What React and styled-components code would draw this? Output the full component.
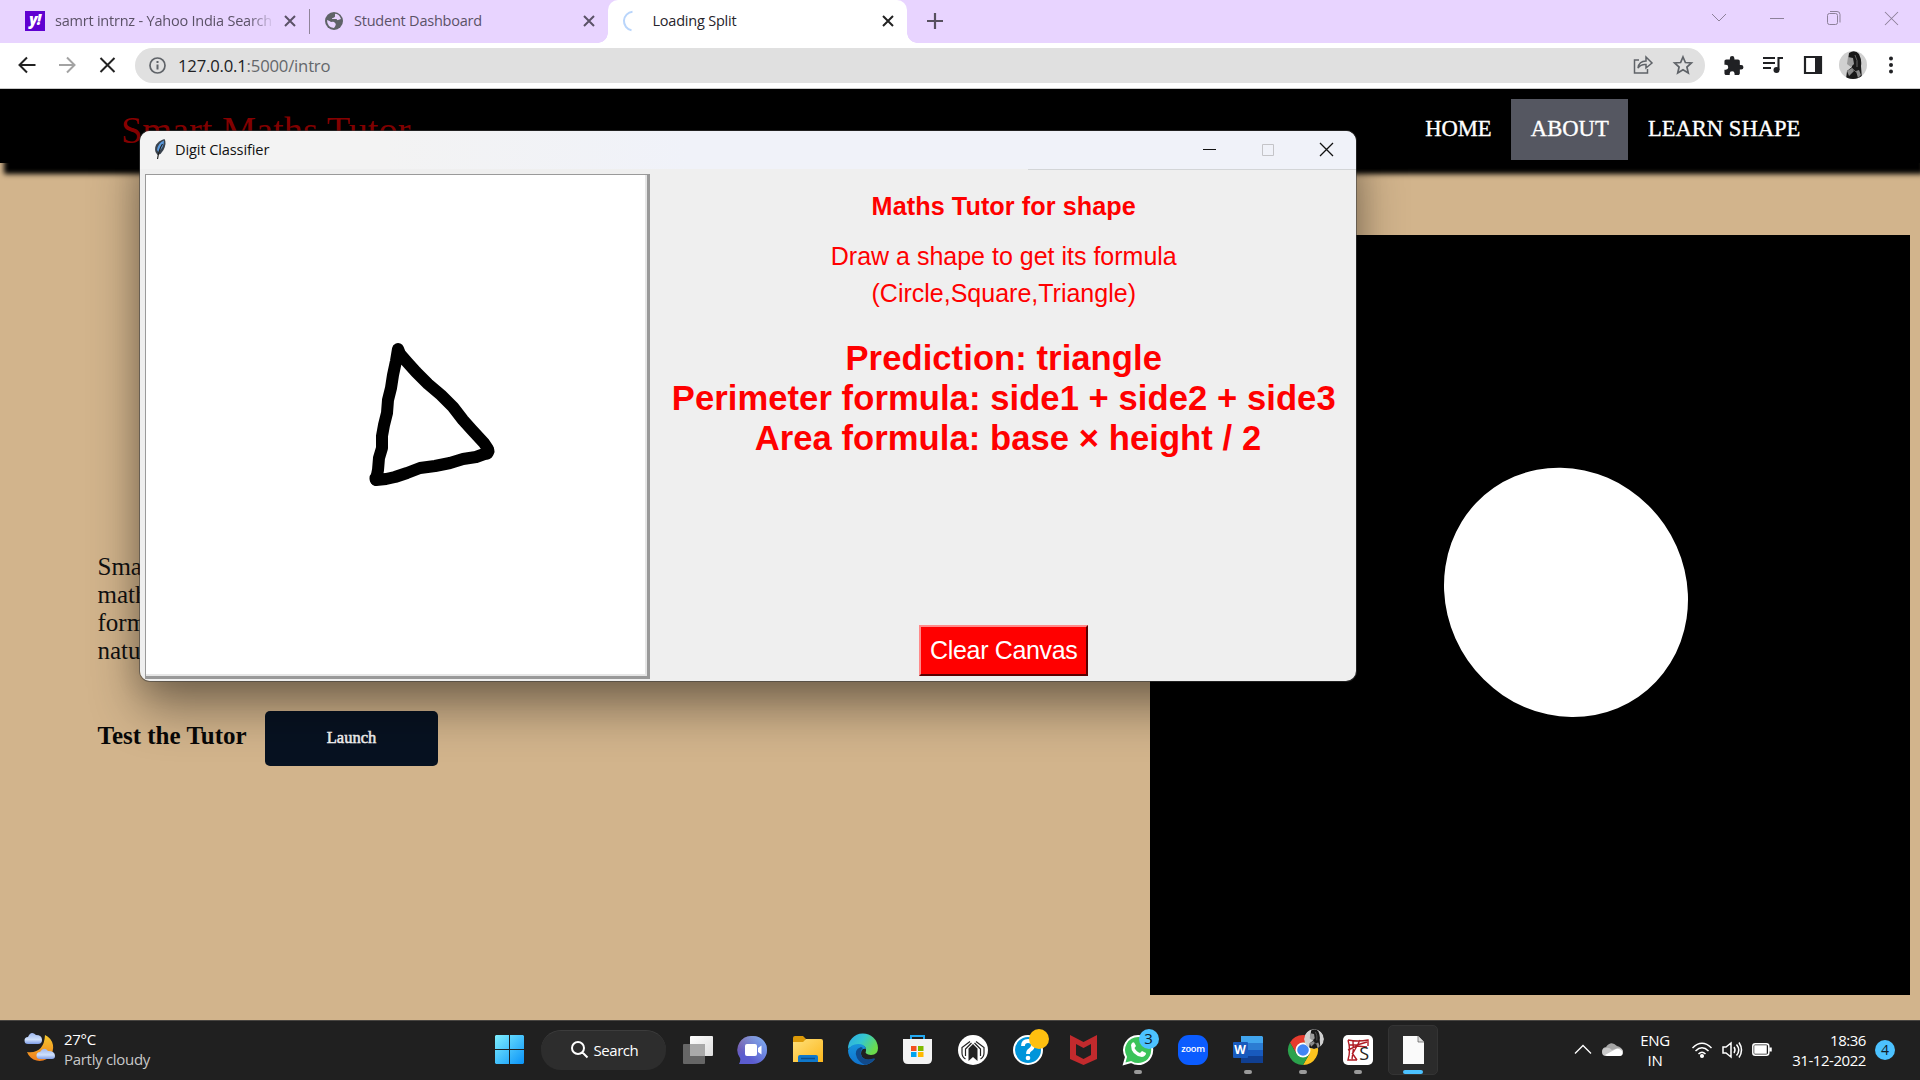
import React from "react";
import styled, { createGlobalStyle } from "styled-components";

const ui = `"Open Sans", "Noto Sans", sans-serif`;
const serif = `"Liberation Serif", "Times New Roman", serif`;
const sans = `"Liberation Sans", Arial, sans-serif`;

const Global = createGlobalStyle`
  * { box-sizing: border-box; }
  body { margin: 0; overflow: hidden; }
  svg { display: block; flex: none; overflow: visible; }
`;

const Screen = styled.div`
  position: relative;
  display: flex;
  flex-direction: column;
  width: 1920px;
  height: 1080px;
  overflow: hidden;
  background: #d2b48c;
`;

/* browser chrome */
const TabStrip = styled.div`
  display: flex;
  height: 43px;
  background: #e8d4ff;
  font: 14.5px ${ui};
  letter-spacing: -0.22px;
`;
const Tab = styled.div`
  display: flex;
  align-items: center;
  width: ${(p) => p.$width}px;
  height: 43px;
  padding: 0 ${(p) => p.$right}px 2px ${(p) => p.$left}px;
  gap: ${(p) => p.$gap || 10}px;
  color: ${(p) => (p.$active ? "#26242b" : "#5b5267")};
  background: ${(p) => (p.$active ? "#fff" : "transparent")};
  border-radius: 10px 10px 0 0;
  position: relative;
  ${(p) =>
    p.$active &&
    `&::before, &::after {
      content: ""; position: absolute; bottom: 0; width: 10px; height: 10px;
    }
    &::before { left: -10px; background: radial-gradient(circle at 0 0, transparent 9.5px, #fff 10px); }
    &::after { right: -10px; background: radial-gradient(circle at 100% 0, transparent 9.5px, #fff 10px); }`}
`;
const TabTitle = styled.span`
  flex: 1;
  min-width: 0;
  overflow: hidden;
  white-space: nowrap;
  ${(p) => p.$fade && "mask-image: linear-gradient(90deg, #000 88%, transparent 100%);"}
`;
const Divider = styled.div`
  width: 1px;
  height: 25px;
  margin-top: 9px;
  background: #8f8499;
`;
const YahooTile = styled.div`
  width: 20px;
  height: 20px;
  flex: none;
  background: #5f01d1;
  color: #fff;
  font: italic 900 15px/17px ${ui};
  text-align: center;
  letter-spacing: -0.5px;
`;
const NewTab = styled.div`
  padding: 13px 0 0 20px;
`;
const Caption = styled.div`
  display: flex;
  margin-left: auto;
  height: 36px;
  align-items: center;
  padding-right: 22.5px;
  gap: 43.5px;
`;
const Toolbar = styled.div`
  display: flex;
  align-items: center;
  height: 46px;
  padding: 0 19px 1px 17px;
  background: #fff;
  border-bottom: 1px solid #c9c9c9;
`;
const NavIcons = styled.div`
  display: flex;
  gap: 20px;
  width: 118px;
`;
const Omnibox = styled.div`
  display: flex;
  align-items: center;
  width: 1570px;
  height: 35px;
  padding: 0 12.5px 0 14px;
  border-radius: 18px;
  background: #e0e0e0;
  font: 16.7px ${ui};
  letter-spacing: -0.2px;
  color: #64676b;
`;
const Url = styled.span`
  flex: 1;
  margin-left: 12px;
  b { font-weight: 400; color: #202124; }
`;
const OmniIcons = styled.div`
  display: flex;
  gap: 20px;
`;
const Extensions = styled.div`
  display: flex;
  align-items: center;
  margin-left: auto;
`;
const ExtensionSlot = styled.div`
  display: flex;
  justify-content: center;
  width: 40px;
  &:last-child { width: 36px; margin-right: -8px; }
`;

/* web page */
const Page = styled.main`
  flex: 1;
  display: flex;
  flex-direction: column;
  font-family: ${serif};
`;
const Header = styled.header`
  display: flex;
  height: 74px;
  padding: 10px 100px 0 121px;
  background: #000;
  box-shadow: 4px 11px 5px #000;
  justify-content: space-between;
`;
const Brand = styled.div`
  padding-top: 9px;
  font-size: 38.3px;
  line-height: 44px;
  color: #8b0000;
`;
const Nav = styled.nav`
  display: flex;
`;
const NavLink = styled.a`
  display: flex;
  align-items: center;
  height: 61px;
  padding: 0 19.6px 2px;
  font-size: 22.6px;
  color: #fff;
  -webkit-text-stroke: 0.35px #fff;
  background: ${(p) => (p.$active ? "#555761" : "transparent")};
`;
const Body = styled.div`
  display: flex;
  flex: 1;
`;
const Intro = styled.section`
  width: 1150px;
  padding: 390px 0 0 97.5px;
`;
const Paragraph = styled.p`
  margin: 0 0 46px;
  font-size: 25px;
  line-height: 28px;
  color: #111;
`;
const TestRow = styled.div`
  display: flex;
  align-items: center;
  gap: 18.500px;
`;
const TestLabel = styled.span`
  width: 149px;
  padding-bottom: 5px;
  white-space: nowrap;
  font-size: 25px;
  font-weight: 700;
  color: #080808;
`;
const LaunchButton = styled.button`
  width: 173px;
  height: 55px;
  padding-bottom: 3px;
  border: 0;
  border-radius: 5px;
  background: #071221;
  color: #f4f4f4;
  -webkit-text-stroke: 0.5px #f4f4f4;
  font: 16.5px ${serif};
`;
const Preview = styled.section`
  width: 760px;
  height: 760px;
  margin-top: 72px;
  background: #000;
`;

/* desktop window floating over the browser */
const Dialog = styled.div`
  position: absolute;
  left: 140px;
  top: 131px;
  width: 1216px;
  height: 550px;
  display: flex;
  flex-direction: column;
  border-radius: 10px;
  overflow: hidden;
  background: #efefef;
`;
const DialogShadow = styled.div`
  position: absolute;
  left: 140px;
  top: 131px;
  width: 1216px;
  height: 550px;
  border-radius: 10px;
  box-shadow: 0 0 0 1px rgba(60, 60, 60, 0.55), 0 26px 50px rgba(0, 0, 0, 0.42), 0 4px 28px rgba(0, 0, 0, 0.12);
`;
const TitleBar = styled.div`
  display: flex;
  align-items: center;
  height: 38px;
  padding: 0 23px 2px 13px;
  font: 14.6px ${ui};
  letter-spacing: -0.12px;
  color: #111;
  background: linear-gradient(90deg, #f3f3f3 20%, #f0f2f9 45%);
`;
const TitleText = styled.span`
  flex: 1;
  margin-left: 8px;
`;
const TitleIcons = styled.div`
  display: flex;
  gap: 45.5px;
`;
const DialogBody = styled.div`
  display: flex;
  flex: 1;
  padding: 0 0 2px 5px;
`;
const Canvas = styled.div`
  width: 505px;
  height: 505px;
  margin-top: 5px;
  border: 1.5px solid #9a9a9a;
  border-right: 3px solid #999;
  border-bottom: 3px solid #999;
  box-shadow: inset -2px -2px #e6e6e6;
  background: #fff;
`;
const Results = styled.div`
  flex: 1;
  display: flex;
  flex-direction: column;
  align-items: center;
  border-top: 1px solid transparent;
  border-image: linear-gradient(90deg, transparent 53.5%, #d3d5d7 53.5%) 1;
  padding-left: 1.5px;
  font-family: ${sans};
  color: #f00;
  text-align: center;
  white-space: pre;
`;
const Heading = styled.h1`
  margin: 21px 0 0;
  font-size: 25.2px;
  letter-spacing: 0.08px;
  line-height: 30px;
`;
const Hint = styled.p`
  margin: 17px 0 0;
  font-size: 25px;
  line-height: 36.5px;
`;
const Answer = styled.p`
  margin: 27px 0 0;
  font-size: 34.6px;
  font-weight: 700;
  letter-spacing: 0.07px;
  line-height: 40px;
`;
const ClearButton = styled.button`
  width: 169px;
  height: 51px;
  margin-top: 166.500px;
  padding: 0;
  background: #f00;
  border: 2px solid;
  border-color: #ff8a8a #5a0000 #5a0000 #ff8a8a;
  font: 25px ${sans};
  letter-spacing: -0.35px;
  color: #fff;
`;

/* taskbar */
const Taskbar = styled.footer`
  display: flex;
  align-items: center;
  height: 60px;
  padding-bottom: 2px;
  border-top: 1px solid #484541;
  background: #202020;
  font: 15px/20px ${ui};
  color: #fff;
`;
const Weather = styled.div`
  display: flex;
  width: 482px;
  padding: 0 0 1px 25px;
  gap: 9px;
  letter-spacing: -0.3px;
  svg { margin-top: 3px; }
  span { display: block; }
  span + span { color: #c8c8c8; }
`;
const Slot = styled.div`
  position: relative;
  display: flex;
  align-items: center;
  justify-content: center;
  width: 55px;
  height: 50px;
  ${(p) =>
    p.$mark &&
    `&::after {
      content: ""; position: absolute; bottom: 1px; left: calc(50% - ${p.$mark === "on" ? 10 : 4}px);
      width: ${p.$mark === "on" ? 20 : 8}px; height: 4px; border-radius: 2px;
      background: ${p.$mark === "on" ? "#4cc2ff" : "#9a9a9a"};
    }`}
`;
const ActiveTile = styled.div`
  display: flex;
  align-items: center;
  justify-content: center;
  width: 50px;
  height: 50px;
  border: 1px solid #343434;
  border-radius: 5px;
  background: #2b2b2b;
`;
const SearchPill = styled.div`
  display: flex;
  align-items: center;
  width: 125px;
  height: 40px;
  margin: 0 4.5px 0 4px;
  padding: 0 0 1px 29.500px;
  gap: 6px;
  border-radius: 20px;
  border-top: 1px solid #3c3c3c;
  background: #2d2d2d;
  letter-spacing: -0.45px;
`;
const Badge = styled.div`
  position: absolute;
  left: 28px;
  top: 4px;
  width: 20px;
  height: 20px;
  border-radius: 50%;
  background: ${(p) => p.$color};
  color: #10202a;
  font: 15px/19px ${ui};
  text-align: center;
  overflow: hidden;
`;
const ZoomTile = styled.div`
  width: 30px;
  height: 30px;
  border-radius: 11px;
  background: #0b5cff;
  font: 600 9.3px/27px ${ui};
  letter-spacing: -0.3px;
  text-align: center;
`;
const WordMark = styled.div`
  position: absolute;
  left: 12px;
  top: 17px;
  width: 15px;
  height: 16px;
  border-radius: 1px;
  background: #185abd;
  font: 700 12px/15px ${ui};
  text-align: center;
`;
const Tray = styled.div`
  display: flex;
  align-items: center;
  margin-left: auto;
  padding-right: 25px;
`;
const Lang = styled.div`
  width: 50px;
  margin: 0 12px 0 7px;
  text-align: center;
  letter-spacing: -0.3px;
`;
const Status = styled.div`
  display: flex;
  align-items: center;
  gap: ${(p) => p.$gap || 10}px;
`;
const Clock = styled.div`
  width: 94px;
  margin-right: 9px;
  text-align: right;
  letter-spacing: -0.45px;
`;
const Count = styled.div`
  width: 20px;
  height: 20px;
  border-radius: 50%;
  background: #4cc2ff;
  color: #10202a;
  font: 14px/19px ${ui};
  text-align: center;
`;

const Line = ({ w = 16, h = w, box = `0 0 ${w} ${h}`, d, color = "#222", sw = 2, fill = "none" }) => (
  <svg width={w} height={h} viewBox={box} fill={fill} stroke={color} strokeWidth={sw}>
    <path d={d} />
  </svg>
);
const Close = ({ color, size = 10, sw = 2 }) => (
  <Line w={size} box="0 0 10 10" d="M0 0 10 10M10 0 0 10" color={color} sw={sw} />
);

const Globe = () => (
  <svg width="18" height="18" viewBox="0 0 18 18">
    <circle cx="9" cy="9" r="9" fill="#5f6368" />
    <path d="M2 8q3 1 4 2 3-1 4 1 2 1-1 5Q2 15 2 8ZM8 2q6-1 8 5l-3 1-3 1-3-1V6l3-1Z" fill="#e8d4ff" />
    <path d="M9 1v3L6 6v2h5l2 3 3-1" fill="none" stroke="#5f6368" strokeWidth="2" />
  </svg>
);
const Info = () => (
  <svg width="17" height="17" viewBox="0 0 17 17" fill="none" stroke="#5f6368" strokeWidth="1.7">
    <circle cx="8.5" cy="8.5" r="7.5" />
    <path d="M8.5 7.5v5M8.5 4v2" strokeWidth="2" />
  </svg>
);
const Portrait = ({ size }) => (
  <svg width={size} height={size} viewBox="0 0 28 28">
    <defs><clipPath id="portrait"><circle cx="14" cy="14" r="14" /></clipPath></defs>
    <g clipPath="url(#portrait)">
      <path fill="#d0d0d0" d="M0 0h28v28H0z" />
      <path fill="#191919" d="M10 2q6-4 10 1 3 6 2 12l1 13H7l1-8 5-4-1-4-3-3Z" />
      <path fill="#9b9b9b" d="m9 6 5 1 1 6-3 3-4-3Z" />
      <path fill="#8a8a8a" d="m8 20 5-3 2 3-5 5ZM17 20l3-1 2 5-3 3Z" />
      <path fill="none" stroke="#666" d="M16 4q3 5 2 12M13 17l5 5" />
    </g>
  </svg>
);
const Puzzle = () => (
  <svg width="19" height="19" viewBox="1.5 1 21 21" fill="#202124">
    <path d="M20.5 11H19V7c0-1.1-.9-2-2-2h-4V3.500a2.500 2.500 0 0 0-5 0V5H4c-1.100 0-2 .9-2 2v3.800h1.500a2.700 2.700 0 0 1 0 5.400H2V20c0 1.100.9 2 2 2h3.800v-1.500a2.700 2.700 0 0 1 5.400 0V22H17c1.100 0 2-.9 2-2v-4h1.500a2.500 2.500 0 0 0 0-5z" />
  </svg>
);
const MusicQueue = () => (
  <svg width="20" height="18" viewBox="0 0 20 18">
    <path d="M0 2h12M0 7h12M0 12h8M15.500 14V2h4.500" stroke="#202124" strokeWidth="2.100" fill="none" />
    <circle cx="13.500" cy="14" r="3" fill="#202124" />
  </svg>
);
const SidePanel = () => (
  <svg width="18" height="18" viewBox="0 0 18 18">
    <path d="M1 1h16v16H1Z" fill="none" stroke="#202124" strokeWidth="2.200" />
    <path d="M11 1h6v16h-6Z" fill="#202124" />
  </svg>
);
const Dots = () => (
  <svg width="18" height="18" viewBox="0 0 18 18" fill="#202124">
    <circle cx="9" cy="2.500" r="2" /><circle cx="9" cy="9" r="2" /><circle cx="9" cy="15.500" r="2" />
  </svg>
);
const Feather = () => (
  <svg width="14" height="20" viewBox="0 0 14 20">
    <path d="M11.500 0Q14 4 10.500 11l-3 4-3 1-2-3Q0 4 11.500 0Z" fill="#39424d" />
    <path d="M11 1.500Q5 4 4 11l1.500 2Q11 8 11 1.500Z" fill="#5b9be0" />
    <path d="M9.500 5Q6 10 4.500 20" stroke="#222" strokeWidth="1.200" fill="none" />
  </svg>
);
const Moon = () => (
  <svg width="30" height="30" viewBox="0 0 30 30">
    <defs>
      <linearGradient id="moon" x2="0" y2="1"><stop stopColor="#f7c92e" /><stop offset="1" stopColor="#ef7d1c" /></linearGradient>
      <linearGradient id="cloud" x2="0" y2="1"><stop stopColor="#9db7f0" /><stop offset=".6" stopColor="#cfe0fb" /><stop offset="1" stopColor="#7d9ce6" /></linearGradient>
    </defs>
    <path d="M20 3a13.500 13.500 0 1 1-18 17q17 2 18-17Z" fill="url(#moon)" />
    <path d="M3 12a3.500 3.500 0 0 1 0-7Q6-2 11 3q6 0 6 5 0 4-4 4Z" fill="url(#cloud)" />
    <path d="M15 27a3.500 3.500 0 0 1 0-7q4-6 8-1 7 0 7 5 0 3-3 3Z" fill="url(#cloud)" />
  </svg>
);
const WinLogo = () => (
  <svg width="29" height="29" viewBox="0 0 29 29">
    <defs><linearGradient id="win" gradientUnits="userSpaceOnUse" x1="0" y1="0" x2="29" y2="29"><stop stopColor="#7ff0ff" /><stop offset="1" stopColor="#0a93f8" /></linearGradient></defs>
    <path d="M1 0h13v14H0V1ZM15 0h13l1 1v13H15ZM0 15h14v14H1l-1-1ZM15 15h14v13l-1 1H15Z" fill="url(#win)" />
  </svg>
);
const TaskView = () => (
  <svg width="30" height="28" viewBox="0 0 30 28">
    <defs><linearGradient id="tv" x2="1" y2="1"><stop stopColor="#fff" /><stop offset="1" stopColor="#ddd" /></linearGradient></defs>
    <rect y="8" width="22" height="20" rx="1" fill="#666" />
    <rect x="7" width="23" height="20" rx="1" fill="url(#tv)" />
    <path d="M7 8h15v12H7Z" fill="#a9a9a9" />
  </svg>
);
const Chat = () => (
  <svg width="28" height="28" viewBox="1 0 28 28">
    <defs><linearGradient id="chat" x2=".6" y2="1"><stop stopColor="#8c6399" /><stop offset=".6" stopColor="#5b5ccf" /></linearGradient>
      <linearGradient id="chat2" x1="1" x2=".3" y2=".7"><stop stopColor="#84b7f3" /><stop offset="1" stopColor="#84b7f3" stopOpacity="0" /></linearGradient></defs>
    <path d="M15 0a14 14 0 1 1 0 28H1q2-4 1-6A14 14 0 0 1 15 0Z" fill="url(#chat)" />
    <path d="M15 0a14 14 0 1 1 0 28H1q2-4 1-6A14 14 0 0 1 15 0Z" fill="url(#chat2)" />
    <rect x="7" y="8" width="12" height="12" rx="2" fill="#fff" />
    <path d="m20 12 3.500-2.500v9L20 16Z" fill="#fff" />
  </svg>
);
const Folder = () => (
  <svg width="30" height="27" viewBox="0 0 30 27">
    <defs><linearGradient id="fo" x2="1" y2="1"><stop stopColor="#ffe07a" /><stop offset="1" stopColor="#fcb71c" /></linearGradient></defs>
    <path d="M0 2q0-2 2-2h8l3 3-2 4H0Z" fill="#dd9a08" />
    <path d="M0 6h10l3-3h15q2 0 2 2v21H0Z" fill="url(#fo)" />
    <path d="M5 26v-5q0-2 2-2h16q2 0 2 2v5Z" fill="#0f78cb" />
    <path d="M8 22.500h14" stroke="#0b4d8c" strokeWidth="1.500" />
  </svg>
);
const Edge = () => (
  <svg width="30" height="30" viewBox="0 0 30 30">
    <defs><linearGradient id="e1" x2="1" y2=".5"><stop stopColor="#2aa7e8" /><stop offset=".5" stopColor="#35c7cf" /><stop offset="1" stopColor="#6bdb4b" /></linearGradient>
      <linearGradient id="e2" x2="0" y2="1"><stop stopColor="#1793dc" /><stop offset="1" stopColor="#1073ce" /></linearGradient></defs>
    <path d="M0 14A15 15 0 0 1 30 13q0 7-7 7-7-1-5-4 1-6-7-6-7 0-11 4Z" fill="url(#e1)" />
    <path d="M0 15q3-6 10-6 7 0 8 5-5-1-5 5 1 8 14 5-5 6-12 6A15 15 0 0 1 0 15Z" fill="url(#e2)" />
    <path d="M13 12q-8 3-4 11 3 5 8 7 6-1 10-7-11 4-14-3-1-5 2-7Z" fill="#114a8b" />
  </svg>
);
const Store = () => (
  <svg width="30" height="29" viewBox="0 0 30 29">
    <path d="M8 6V1h13v5" stroke="#23a9f1" strokeWidth="2" fill="none" />
    <path d="M0 4h29v20q0 5-5 5H5q-5 0-5-5Z" fill="#f3f3f3" />
    <path d="M8 11h5.500v5H8Z" fill="#f25022" /><path d="M15 11h5.500v5H15Z" fill="#7fba00" />
    <path d="M8 17h5.500v5H8Z" fill="#00a4ef" /><path d="M15 17h5.500v5H15Z" fill="#ffb900" />
  </svg>
);
const Hood = () => (
  <svg width="30" height="30" viewBox="0 0 30 30">
    <circle cx="15" cy="15" r="15" fill="#fff" />
    <path d="M10.500 26V13.500L15 9l4.500 4.500V26L15 22Z" fill="#222" />
    <path d="M7.500 24Q4 22 4 18v-5.500l8-6M22.500 24q3.500-2 3.500-6v-5.500l-8-6M7.500 21v-7l6-6M22.500 21v-7l-6-6" fill="none" stroke="#222" strokeWidth="1.200" />
  </svg>
);
const Help = () => (
  <svg width="30" height="30" viewBox="0 0 30 30">
    <circle cx="15" cy="15" r="14" fill="#0095da" stroke="#fff" strokeWidth="2" />
    <path d="M10 11q0-5 5-5t5 4q0 3-3 5-2 1-2 4" stroke="#fff" strokeWidth="3.800" fill="none" />
    <circle cx="15" cy="23" r="2.300" fill="#fff" />
  </svg>
);
const Shield = () => (
  <svg width="27" height="30" viewBox="0 0 27 30">
    <path d="M0 0 13.500 7 27 0v24l-13.500 6L0 24ZM6 9v11l7.500 4 7.500-4V9l-7.500 4Z" fill="#c22a2d" fillRule="evenodd" />
  </svg>
);
const WhatsApp = () => (
  <svg width="30" height="30" viewBox="0 0 30 30">
    <path d="M15 1a14 14 0 1 1-7 26l-7 2 2-7A14 14 0 0 1 15 1Z" fill="#3bc35a" stroke="#fff" strokeWidth="2" />
    <path d="M9 8q2-2 3 1l1 2-1.500 2q2 4 5.500 5l2-2 4 2q0 3-4 4Q8 20 8 10Z" fill="#fff" />
  </svg>
);
const WordPage = () => (
  <svg width="29" height="27" viewBox="0 0 29 27">
    <path d="M7 0h21l1 1v6H7Z" fill="#41a5ee" /><path d="M7 7h22v7H7Z" fill="#2b7cd3" />
    <path d="M7 14h22v6H7Z" fill="#185abd" /><path d="M7 20h22v7H7Z" fill="#103f91" />
  </svg>
);
const Chrome = () => (
  <svg width="30" height="30" viewBox="0 0 30 30">
    <path d="M2 7.500A15 15 0 0 1 28 7.500H15L8.500 18.700Z" fill="#e63b2e" />
    <path d="M28 7.500A15 15 0 0 1 15 30l6.500-11.300L15 7.500Z" fill="#fcc31e" />
    <path d="M15 30A15 15 0 0 1 2 7.500L8.500 18.700h13Z" fill="#2ba24c" />
    <circle cx="15" cy="15" r="7.500" fill="#fff" /><circle cx="15" cy="15" r="5.800" fill="#4285f4" />
  </svg>
);
const SpyderTile = styled.div`
  position: relative;
  width: 30px;
  height: 30px;
  border-radius: 5px;
  background: #fff;
`;
const SpyderLetter = styled.span`
  position: absolute;
  right: 4px;
  bottom: 3px;
  font: 500 18px/18px ${ui};
  color: #222;
`;
const Spyder = () => (
  <SpyderTile>
    <svg width="30" height="30" viewBox="0 0 30 30" fill="none" stroke="#b01c24" strokeWidth="1.400">
      <path d="M5 5q10 2 20 0v6M5 5q3 10 0 20h9M10 6q1 9-1 18M5 15l9-4 3-6M6 10h8l10-3M14 11l10 1M14 11l-4 7M9 18l5 7" />
    </svg>
    <SpyderLetter>S</SpyderLetter>
  </SpyderTile>
);
const File = () => (
  <svg width="21" height="28" viewBox="0 0 21 28">
    <path d="M0 0h15l6 6v22H0Z" fill="#fafafa" /><path d="M15 0v6h6" fill="#ddd" stroke="#555" strokeWidth=".7" />
  </svg>
);
const OneDrive = () => (
  <svg width="20" height="13" viewBox="0 0 20 13">
    <path d="M4 12a4 4 0 0 1-1-8Q8-3 14 3q5 1 6 6Z" fill="#a5a5a5" />
    <path d="M3 13a4 4 0 0 1 0-8q3-1 6 2l6-2q5 0 5 4t-4 4Z" fill="#c9c9c9" />
    <path d="m2 12 11-6q3-1 6 2 2 5-3 5H4Z" fill="#fff" />
  </svg>
);

export default function App() {
  return (
    <>
      <Global />
      <Screen>
        <TabStrip>
          <Tab $width={309} $left={25} $right={14}>
            <YahooTile>y!</YahooTile>
            <TabTitle $fade>samrt intrnz - Yahoo India Search</TabTitle>
            <Close color="#5b5267" />
          </Tab>
          <Divider />
          <Tab $width={298} $left={15} $right={14.5} $gap={11}>
            <Globe />
            <TabTitle>Student Dashboard</TabTitle>
            <Close color="#5b5267" />
          </Tab>
          <Tab $active $width={299} $left={14} $right={14.5} $gap={10.5}>
            <Line w={20} d="M11.500 .8A9.300 9.300 0 0 0 10.500 19.200" box="1 0 20 20" color="#b9d5fb" />
            <TabTitle>Loading Split</TabTitle>
            <Close color="#222" />
          </Tab>
          <NewTab>
            <Line w={16} d="M8 0v16M0 8h16" color="#57505f" sw={2.2} />
          </NewTab>
          <Caption>
            <Line w={14} h={8} d="M0 0 7 7 14 0" color="#8d8199" sw={1} />
            <Line w={14} h={14} d="M0 7.500h14" color="#8d8199" sw={1} />
            <Line w={14} h={14} d="M2.500 2.500h6q2 0 2 2v7q0 2-2 2h-6q-2 0-2-2v-7q0-2 2-2M3 .5h7q3 0 3 3v8" color="#8d8199" sw={1} />
            <Close color="#8d8199" size={13} sw={0.8} />
          </Caption>
        </TabStrip>
        <Toolbar>
          <NavIcons>
            <Line w={20} d="M18.500 10H3M10 2.500 2.500 10 10 17.500" sw={2} />
            <Line w={20} d="M2 10h15M10 2.500 17.500 10 10 17.500" color="#a3a3a3" />
            <Line w={20} d="M3.500 3 17.500 17M17.500 3 3.500 17" />
          </NavIcons>
          <Omnibox>
            <Info />
            <Url><b>127.0.0.1</b>:5000/intro</Url>
            <OmniIcons>
              <Line w={20} d="M6 5H1.500v13h13v-4M5 13Q6 6 13 6V2l6 6-6 5V9.500Q8 9 5 13Z" color="#5f6368" sw={1.500} />
              <Line w={20} d="m10 2 2.400 5.500 6 .5-4.500 4 1.400 6L10 14.800 4.700 18l1.400-6-4.500-4 6-.5Z" color="#5f6368" sw={1.700} />
            </OmniIcons>
          </Omnibox>
          <Extensions>
            <ExtensionSlot><Puzzle /></ExtensionSlot>
            <ExtensionSlot><MusicQueue /></ExtensionSlot>
            <ExtensionSlot><SidePanel /></ExtensionSlot>
            <ExtensionSlot><Portrait size={28} /></ExtensionSlot>
            <ExtensionSlot><Dots /></ExtensionSlot>
          </Extensions>
        </Toolbar>
        <Page>
          <Header>
            <Brand>Smart Maths Tutor</Brand>
            <Nav>
              <NavLink>HOME</NavLink>
              <NavLink $active>ABOUT</NavLink>
              <NavLink>LEARN SHAPE</NavLink>
            </Nav>
          </Header>
          <Body>
            <Intro>
              <Paragraph>Smart<br />maths<br />formula<br />nature</Paragraph>
              <TestRow>
                <TestLabel>Test the Tutor</TestLabel>
                <LaunchButton>Launch</LaunchButton>
              </TestRow>
            </Intro>
            <Preview>
              <svg width="760" height="760" viewBox="1150 235 760 760">
                <ellipse cx="1566" cy="592.400" rx="127.100" ry="119.500" transform="rotate(55.400 1566 592.400)" fill="#fff" />
              </svg>
            </Preview>
          </Body>
        </Page>
        <DialogShadow />
        <Dialog>
          <TitleBar>
            <Feather />
            <TitleText>Digit Classifier</TitleText>
            <TitleIcons>
              <Line w={13} d="M0 6.500h13" color="#111" sw={1} />
              <Line w={13} d="M.500 1.500h11v11h-11Z" color="#c4c4c8" sw={1} />
              <Close color="#111" size={13} sw={1} />
            </TitleIcons>
          </TitleBar>
          <DialogBody>
            <Canvas>
              <svg width="500" height="500" viewBox="146 175 500 500" fill="none" stroke="#000" strokeWidth="12" strokeLinecap="round" strokeLinejoin="round">
                <path d="M398 349 396 361 393 375 391 388 388 400 387 413 384 425 382 436 382 448 379 458 378 470 376 480 386 479 395 477 407 473 420 468 435 466 450 463 463 459 476 457 487 453 488 449 484 443 472 430 463 420 453 407 441 395 428 384 416 372 407 362 400 354Z" />
                <path d="M376 479v-1M487 453l1-2" strokeWidth="13" />
              </svg>
            </Canvas>
            <Results>
              <Heading>Maths Tutor for shape</Heading>
              <Hint>{"Draw a shape to get its formula\n(Circle,Square,Triangle)"}</Hint>
              <Answer>{"Prediction: triangle\nPerimeter formula: side1 + side2 + side3\n Area formula: base × height / 2"}</Answer>
              <ClearButton>Clear Canvas</ClearButton>
            </Results>
          </DialogBody>
        </Dialog>
        <Taskbar>
          <Weather>
            <Moon />
            <div><span>27°C</span><span>Partly cloudy</span></div>
          </Weather>
          <Slot><WinLogo /></Slot>
          <SearchPill>
            <Line w={17} d="m11.500 11.500 5 5M13 7A6 6 0 1 1 1 7a6 6 0 0 1 12 0Z" color="#fff" />
            Search
          </SearchPill>
          <Slot><TaskView /></Slot>
          <Slot><Chat /></Slot>
          <Slot><Folder /></Slot>
          <Slot><Edge /></Slot>
          <Slot><Store /></Slot>
          <Slot><Hood /></Slot>
          <Slot><Help /><Badge $color="#ffc010" /></Slot>
          <Slot><Shield /></Slot>
          <Slot $mark="idle"><WhatsApp /><Badge $color="#4cc2ff">3</Badge></Slot>
          <Slot><ZoomTile>zoom</ZoomTile></Slot>
          <Slot $mark="idle"><WordPage /><WordMark>W</WordMark></Slot>
          <Slot $mark="idle"><Chrome /><Badge><Portrait size={20} /></Badge></Slot>
          <Slot $mark="idle"><Spyder /></Slot>
          <Slot $mark="on"><ActiveTile><File /></ActiveTile></Slot>
          <Tray>
            <Status $gap={12}>
              <Line w={16} h={9} d="M0 8.500 8 .500 16 8.500" color="#fff" sw={1.300} />
              <OneDrive />
            </Status>
            <Lang>ENG<br />IN</Lang>
            <Status>
              <svg width="20" height="16" viewBox="0 0 20 16" fill="none" stroke="#fff" strokeWidth="1.500">
                <path d="M.500 6Q10-3.500 19.500 6M3.500 9Q10 2.500 16.500 9M6.500 12Q10 8.500 13.500 12" /><circle cx="10" cy="14" r="1.300" fill="#fff" />
              </svg>
              <svg width="20" height="18" viewBox="0 0 20 18" fill="none" stroke="#fff" strokeWidth="1.500">
                <path d="M1 6h3l5-4v14l-5-4H1ZM12 6q2 3 0 6M14.500 3.500q4.500 5.500 0 11M17 1.500q5 7.500 0 15" />
              </svg>
              <svg width="20" height="13" viewBox="0 0 20 13" fill="none" stroke="#fff" strokeWidth="1.500">
                <rect x=".8" y=".8" width="16" height="11.400" rx="2.500" /><path d="M3 3h11v7H3Z" fill="#fff" /><path d="M18.500 4.500v4" strokeWidth="2.500" />
              </svg>
            </Status>
            <Clock>18:36<br />31-12-2022</Clock>
            <Count>4</Count>
          </Tray>
        </Taskbar>
      </Screen>
    </>
  );
}
